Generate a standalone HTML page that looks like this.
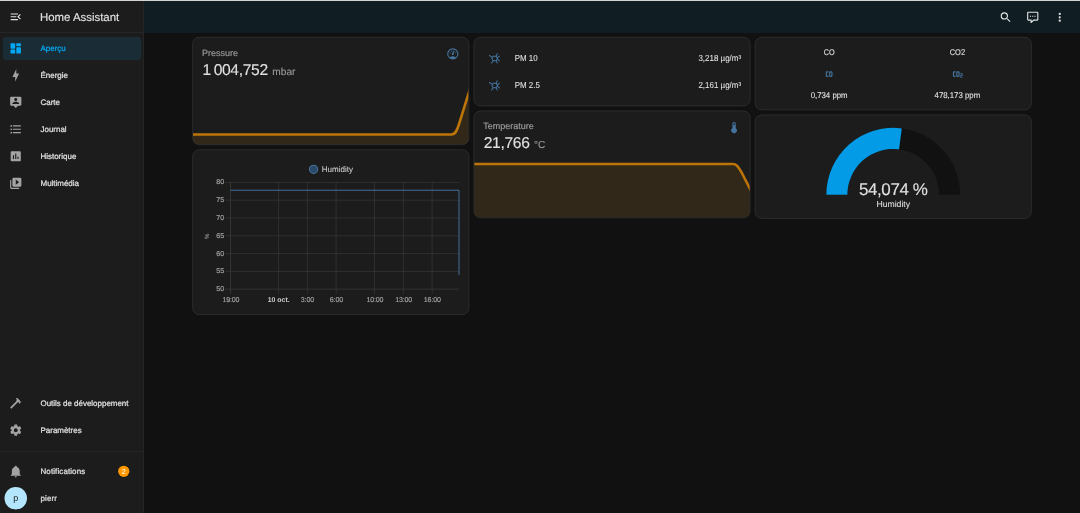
<!DOCTYPE html>
<html lang="fr">
<head>
<meta charset="utf-8">
<title>Home Assistant</title>
<style>
*{box-sizing:border-box;margin:0;padding:0}
html,body{width:1080px;height:513px;overflow:hidden;background:#111111}
body{font-family:"Liberation Sans",Arial,sans-serif;color:#e1e1e1;position:relative;text-rendering:geometricPrecision}
#topline{position:absolute;left:0;top:0;width:1080px;height:1px;background:#d4d5d3;z-index:10}
#app{position:absolute;left:0;top:1px;width:1940px;height:930px;transform:scale(.5625);transform-origin:0 0;background:#111111;overflow:hidden;filter:blur(.35px)}
svg{display:block}
/* sidebar */
#sidebar{position:absolute;left:0;top:0;width:256px;height:930px;background:#1c1c1c;border-right:1px solid #2e2e2e}
#sidebar .title{position:absolute;left:0;top:0;width:255px;height:56px;border-bottom:1px solid #2e2e2e}
#sidebar .title svg{position:absolute;left:16px;top:16px;width:24px;height:24px;fill:#e1e1e1}
#sidebar .title span{position:absolute;left:71px;top:0;line-height:58px;font-size:20.3px;color:#e1e1e1;white-space:nowrap;-webkit-text-stroke:.25px #e1e1e1}
.item{position:absolute;left:5px;width:246px;height:41px;border-radius:6px}
.item svg{position:absolute;left:11px;top:8.200px;width:24px;height:24px;fill:#a3a3a3}
.item span{position:absolute;left:67px;top:0;line-height:41px;font-size:14.15px;font-weight:400;color:#e1e1e1;white-space:nowrap;-webkit-text-stroke:.4px #e1e1e1}
.item.sel{background:#1a2c36}
.item.sel svg{fill:#03a9f4}
.item.sel span{color:#03a9f4;-webkit-text-stroke-color:#03a9f4}
#sidebar .divider{position:absolute;left:0;top:801px;width:255px;height:1px;background:#2e2e2e}
.badge{position:absolute;left:205px;top:10px;width:20px;height:20px;border-radius:50%;background:#ff9800;color:#fff;font-size:13px;line-height:20px;text-align:center}
.avatar{position:absolute;left:3px;top:0;width:40px;height:40px;border-radius:50%;background:#b3e5fc;color:#212121;font-size:16px;line-height:40px;text-align:center}
/* header */
#header{position:absolute;left:256px;top:0;width:1684px;height:57px;background:#101e24}
#header svg{position:absolute;top:16.500px;width:24px;height:24px;fill:#e1e1e1}
/* cards */
.card{position:absolute;background:#1c1c1c;border:1px solid #3c3c3c;border-radius:12px;overflow:hidden}
.sname{position:absolute;left:16px;top:16px;font-size:16px;-webkit-text-stroke:.3px #9b9b9b;line-height:24px;color:#9b9b9b;white-space:nowrap}
.sval{position:absolute;left:17px;top:38px;font-size:27.8px;line-height:40px;color:#e1e1e1;white-space:nowrap;letter-spacing:-.6px;-webkit-text-stroke:.2px #e1e1e1}
.sval small{font-size:18px;color:#9b9b9b;margin-left:8px;letter-spacing:0;-webkit-text-stroke:.2px #9b9b9b}
.sicon{position:absolute;right:16px;top:17px;width:24px;height:24px;fill:#44739e}
.row{position:absolute;left:16px;right:16px;height:40px}
.row svg{position:absolute;left:8px;top:8px;width:24px;height:24px}
.row .n{position:absolute;left:56px;top:1px;line-height:40px;font-size:15.4px;color:#e1e1e1;white-space:nowrap;-webkit-text-stroke:.12px #e1e1e1;transform:scaleX(.92);transform-origin:0 50%}
.row .v{position:absolute;right:0;top:1px;line-height:40px;font-size:15.4px;color:#e1e1e1;white-space:nowrap;-webkit-text-stroke:.12px #e1e1e1;transform:scaleX(.92);transform-origin:100% 50%}
.gl{position:absolute;width:246px;text-align:center;font-size:14.8px;line-height:20px;color:#e1e1e1;white-space:nowrap;-webkit-text-stroke:.2px #e1e1e1;transform:scaleX(.94)}
</style>
</head>
<body>
<div id="topline"></div>
<div id="app">

<div id="header">
  <svg style="left:1520px" viewBox="0 0 24 24"><path d="M9.5,3A6.5,6.5 0 0,1 16,9.5C16,11.11 15.41,12.59 14.44,13.73L14.71,14H15.5L20.5,19L19,20.5L14,15.5V14.71L13.73,14.44C12.59,15.41 11.11,16 9.5,16A6.5,6.5 0 0,1 3,9.5A6.5,6.5 0 0,1 9.5,3M9.5,5C7,5 5,7 5,9.5C5,12 7,14 9.5,14C12,14 14,12 14,9.5C14,7 12,5 9.5,5Z"/></svg>
  <svg style="left:1568px" viewBox="0 0 24 24"><path d="M9,22A1,1 0 0,1 8,21V18H4A2,2 0 0,1 2,16V4C2,2.89 2.9,2 4,2H20A2,2 0 0,1 22,4V16A2,2 0 0,1 20,18H13.9L10.2,21.71C10,21.9 9.75,22 9.5,22V22H9M10,16V19.08L13.08,16H20V4H4V16H10M17,11H15V9H17V11M13,11H11V9H13V11M9,11H7V9H9V11Z"/></svg>
  <svg style="left:1616px" viewBox="0 0 24 24"><path d="M12,16A2,2 0 0,1 14,18A2,2 0 0,1 12,20A2,2 0 0,1 10,18A2,2 0 0,1 12,16M12,10A2,2 0 0,1 14,12A2,2 0 0,1 12,14A2,2 0 0,1 10,12A2,2 0 0,1 12,10M12,4A2,2 0 0,1 14,6A2,2 0 0,1 12,8A2,2 0 0,1 10,6A2,2 0 0,1 12,4Z"/></svg>
</div>

<div id="sidebar">
  <div class="title">
    <svg viewBox="0 0 24 24"><path d="M21,15.61L19.59,17L14.58,12L19.59,7L21,8.39L17.44,12L21,15.61M3,6H16V8H3V6M3,13V11H13V13H3M3,18V16H16V18H3Z"/></svg>
    <span>Home Assistant</span>
  </div>
  <div class="item sel" style="top:64px"><svg viewBox="0 0 24 24"><rect x="2.700" y="3" width="8.300" height="9.800" rx="1.200"/><rect x="2.700" y="14.300" width="8.300" height="7.200" rx="1.200"/><rect x="13" y="3" width="8.200" height="5.600" rx="1.200"/><rect x="13" y="10.200" width="8.200" height="11.300" rx="1.200"/></svg><span>Aperçu</span></div>
  <div class="item" style="top:112px"><svg viewBox="0 0 24 24"><path d="M11,15H6L13,1V9H18L11,23V15Z"/></svg><span>Énergie</span></div>
  <div class="item" style="top:160px"><svg viewBox="0 0 24 24"><path d="M20,2H4A2,2 0 0,0 2,4V16A2,2 0 0,0 4,18H8L12,22L16,18H20A2,2 0 0,0 22,16V4A2,2 0 0,0 20,2M12,4.3C13.5,4.3 14.7,5.5 14.7,7C14.7,8.5 13.5,9.7 12,9.7C10.5,9.7 9.3,8.5 9.3,7C9.3,5.5 10.5,4.3 12,4.3M18,15H6V14.1C6,12.1 10,11 12,11C14,11 18,12.1 18,14.1V15Z"/></svg><span>Carte</span></div>
  <div class="item" style="top:208px"><svg viewBox="0 0 24 24"><path d="M7,5H21V7H7V5M7,13V11H21V13H7M4,4.5A1.5,1.5 0 0,1 5.5,6A1.5,1.5 0 0,1 4,7.5A1.5,1.5 0 0,1 2.5,6A1.5,1.5 0 0,1 4,4.5M4,10.5A1.5,1.5 0 0,1 5.5,12A1.5,1.5 0 0,1 4,13.5A1.5,1.5 0 0,1 2.5,12A1.5,1.5 0 0,1 4,10.5M7,19V17H21V19H7M4,16.5A1.5,1.5 0 0,1 5.5,18A1.5,1.5 0 0,1 4,19.5A1.5,1.5 0 0,1 2.5,18A1.5,1.5 0 0,1 4,16.5Z"/></svg><span>Journal</span></div>
  <div class="item" style="top:256px"><svg viewBox="0 0 24 24"><path d="M19,3H5C3.9,3 3,3.9 3,5V19C3,20.1 3.9,21 5,21H19C20.1,21 21,20.1 21,19V5C21,3.9 20.1,3 19,3M9,17H7V10H9V17M13,17H11V7H13V17M17,17H15V13H17V17Z"/></svg><span>Historique</span></div>
  <div class="item" style="top:304px"><svg viewBox="0 0 24 24"><path d="M4,6H2V20A2,2 0 0,0 4,22H18V20H4V6M20,2H8A2,2 0 0,0 6,4V16A2,2 0 0,0 8,18H20A2,2 0 0,0 22,16V4A2,2 0 0,0 20,2M12,14.5V5.5L18,10L12,14.5Z"/></svg><span>Multimédia</span></div>

  <div class="item" style="top:695px"><svg viewBox="0 0 24 24"><path d="M2,19.63L13.43,8.2L12.72,7.5L14.14,6.07L12,3.89C13.2,2.7 15.09,2.7 16.27,3.89L19.87,7.5L18.45,8.91H21.29L22,9.62L18.45,13.21L17.74,12.5V9.62L16.27,11.04L15.56,10.33L4.13,21.76L2,19.63Z"/></svg><span style="top:0.3px">Outils de développement</span></div>
  <div class="item" style="top:743px"><svg viewBox="0 0 24 24"><path d="M12,15.5A3.5,3.5 0 0,1 8.5,12A3.5,3.5 0 0,1 12,8.5A3.5,3.5 0 0,1 15.5,12A3.5,3.5 0 0,1 12,15.5M19.43,12.97C19.47,12.65 19.5,12.33 19.5,12C19.5,11.67 19.47,11.34 19.43,11L21.54,9.37C21.73,9.22 21.78,8.95 21.66,8.73L19.66,5.27C19.54,5.05 19.27,4.96 19.05,5.05L16.56,6.05C16.04,5.66 15.5,5.32 14.87,5.07L14.5,2.42C14.46,2.18 14.25,2 14,2H10C9.75,2 9.54,2.18 9.5,2.42L9.13,5.07C8.5,5.32 7.96,5.66 7.44,6.05L4.95,5.05C4.73,4.96 4.46,5.05 4.34,5.27L2.34,8.73C2.21,8.95 2.27,9.22 2.46,9.37L4.57,11C4.53,11.34 4.5,11.67 4.5,12C4.5,12.33 4.53,12.65 4.57,12.97L2.46,14.63C2.27,14.78 2.21,15.05 2.34,15.27L4.34,18.73C4.46,18.95 4.73,19.03 4.95,18.95L7.44,17.94C7.96,18.34 8.5,18.68 9.13,18.93L9.5,21.58C9.54,21.82 9.75,22 10,22H14C14.25,22 14.46,21.82 14.5,21.58L14.87,18.93C15.5,18.67 16.04,18.34 16.56,17.94L19.05,18.95C19.27,19.03 19.54,18.95 19.66,18.73L21.66,15.27C21.78,15.05 21.73,14.78 21.54,14.63L19.43,12.97Z"/></svg><span style="top:0.3px">Paramètres</span></div>
  <div class="divider"></div>
  <div class="item" style="top:816px"><svg viewBox="0 0 24 24"><path d="M21,19V20H3V19L5,17V11C5,7.9 7.03,5.17 10,4.29C10,4.19 10,4.1 10,4A2,2 0 0,1 12,2A2,2 0 0,1 14,4C14,4.1 14,4.19 14,4.29C16.97,5.17 19,7.9 19,11V17L21,19M14,21A2,2 0 0,1 12,23A2,2 0 0,1 10,21"/></svg><span style="letter-spacing:.2px">Notifications</span><div class="badge">2</div></div>
  <div class="item" style="top:864px"><div class="avatar">p</div><span style="letter-spacing:.25px">pierr</span></div>
</div>

<!-- column 1 -->
<div class="card" id="c-pressure" style="left:342px;top:64px;width:492px;height:192px">
  <div class="sname">Pressure</div>
  <svg class="sicon" viewBox="0 0 24 24"><path d="M12,2A10,10 0 0,0 2,12A10,10 0 0,0 12,22A10,10 0 0,0 22,12A10,10 0 0,0 12,2M12,4A8,8 0 0,1 20,12C20,14.4 19,16.5 17.3,18C15.9,16.7 14,16 12,16C10,16 8.2,16.7 6.7,18C5,16.5 4,14.4 4,12A8,8 0 0,1 12,4M14,5.89C13.62,5.9 13.26,6.15 13.1,6.54L11.81,9.77L11.71,10C11,10.13 10.41,10.6 10.14,11.26C9.73,12.29 10.23,13.45 11.26,13.86C12.29,14.27 13.45,13.77 13.86,12.74C14.12,12.08 14,11.32 13.57,10.76L13.67,10.5L14.96,7.29L14.97,7.26C15.17,6.75 14.92,6.17 14.41,5.96C14.28,5.91 14.15,5.89 14,5.89M10,6A1,1 0 0,0 9,7A1,1 0 0,0 10,8A1,1 0 0,0 11,7A1,1 0 0,0 10,6M7,9A1,1 0 0,0 6,10A1,1 0 0,0 7,11A1,1 0 0,0 8,10A1,1 0 0,0 7,9M17,9A1,1 0 0,0 16,10A1,1 0 0,0 17,11A1,1 0 0,0 18,10A1,1 0 0,0 17,9Z"/></svg>
  <div class="sval">1&#8239;004,752<small>mbar</small></div>
  <svg style="position:absolute;left:0;top:0;width:490px;height:190px" viewBox="0 0 490 190" preserveAspectRatio="none">
    <path d="M-5,172.300 L459.500,172.300 C466.500,172.300 469.500,165.500 473,154 L493,89.800 L492,195 L-5,195Z" fill="#ff9800" fill-opacity=".098"/>
    <path d="M-5,172.300 L459.500,172.300 C466.500,172.300 469.500,165.500 473,154 L493,89.800" fill="none" stroke="#bd750a" stroke-width="4.600" stroke-linecap="round" stroke-linejoin="round"/>
  </svg>
</div>

<div class="card" id="c-chart" style="left:342px;top:264px;width:492px;height:294px">
  <svg style="position:absolute;left:-1px;top:-1px;width:492px;height:294px" viewBox="0 0 492 294" font-family="Liberation Sans, Arial, sans-serif" font-size="12.600" fill="#a6a6a6" stroke="#a6a6a6" stroke-width=".25">
    <g stroke="#3f3f3f" stroke-width="1" fill="none">
      <path d="M58,58.500H474.500 M58,90.100H474.500 M58,121.700H474.500 M58,153.400H474.500 M58,185H474.500 M58,216.600H474.500"/>
      <path d="M153.100,58V257 M204.300,58V257 M255.500,58V257 M323.800,58V257 M375,58V257 M426.200,58V257"/>
      <path d="M58,248.200H474.500 M67.800,58V257" stroke="#4a4541"/>
    </g>
    <path d="M67.800,72.400H474V223" fill="none" stroke="#44739e" stroke-width="1.700"/>
    <circle cx="215.500" cy="35.200" r="7.400" fill="#2c4a68" stroke="#44739e" stroke-width="1.800"/>
    <text x="230" y="40" fill="#cdcdcd" stroke="#cdcdcd" stroke-width=".15" font-size="14.600" textLength="55.500" lengthAdjust="spacingAndGlyphs">Humidity</text>
    <g text-anchor="end">
      <text x="56.500" y="62">80</text><text x="56.500" y="93.600">75</text><text x="56.500" y="125.200">70</text><text x="56.500" y="156.900">65</text><text x="56.500" y="188.500">60</text><text x="56.500" y="220.100">55</text><text x="56.500" y="251.700">50</text>
    </g>
    <g text-anchor="middle" letter-spacing="-.3">
      <text x="68.500" y="271">19:00</text><text x="153.500" y="271" font-weight="bold" font-size="12.300" stroke-width="0" fill="#cfcfcf" letter-spacing="0">10 oct.</text><text x="204.500" y="271">3:00</text><text x="256" y="271">6:00</text><text x="324.500" y="271">10:00</text><text x="375.500" y="271">13:00</text><text x="426.500" y="271">16:00</text>
    </g>
    <text x="0" y="0" transform="translate(30,154) rotate(-90)" text-anchor="middle" font-size="11" stroke-width="0">%</text>
  </svg>
</div>

<!-- column 2 -->
<div class="card" id="c-pm" style="left:842px;top:64px;width:492px;height:123px">
  <div class="row" style="top:16px"><svg viewBox="0 0 24 24" fill="none" stroke="#44739e" stroke-width="1.800" stroke-linecap="round" stroke-linejoin="round"><path d="M7.400,13.200L9.800,9.100H15L17.400,13.200L15,17.300H9.800Z"/><path d="M3.200,7.900L8.300,11.300M15,9.100L17,4.700M17.400,12.300L20.800,8.900M17.400,14.300L20.800,17.400M9.800,17.300L7,21.200M15,17.300L17,21.200" stroke-width="1.900"/></svg><span class="n">PM 10</span><span class="v">3,218 µg/m³</span></div>
  <div class="row" style="top:64px"><svg viewBox="0 0 24 24" fill="none" stroke="#44739e" stroke-width="1.800" stroke-linecap="round" stroke-linejoin="round"><path d="M7.400,13.200L9.800,9.100H15L17.400,13.200L15,17.300H9.800Z"/><path d="M3.200,7.900L8.300,11.300M15,9.100L17,4.700M17.400,12.300L20.800,8.900M17.400,14.300L20.800,17.400M9.800,17.300L7,21.200M15,17.300L17,21.200" stroke-width="1.900"/></svg><span class="n">PM 2.5</span><span class="v">2,161 µg/m³</span></div>
</div>

<div class="card" id="c-temp" style="left:842px;top:195px;width:492px;height:191px">
  <div class="sname">Temperature</div>
  <svg class="sicon" viewBox="0 0 24 24"><path d="M15,13V5A3,3 0 0,0 9,5V13A5,5 0 1,0 15,13M12,4A1,1 0 0,1 13,5V8H11V5A1,1 0 0,1 12,4Z"/></svg>
  <div class="sval" style="top:37px">21,766<small>°C</small></div>
  <svg style="position:absolute;left:0;top:-1px;width:490px;height:190px" viewBox="0 0 490 190" preserveAspectRatio="none">
    <path d="M-5,94.800 L460,94.800 C466,94.800 469,99 475,109 L492,142 L492,195 L-5,195Z" fill="#ff9800" fill-opacity=".098"/>
    <path d="M-5,94.800 L460,94.800 C466,94.800 469,99 475,109 L492,142" fill="none" stroke="#bd750a" stroke-width="4.600" stroke-linecap="round" stroke-linejoin="round"/>
  </svg>
</div>

<!-- column 3 -->
<div class="card" id="c-co" style="left:1342px;top:64px;width:492px;height:130px">
  <div class="gl" style="left:8px;top:16.800px;transform:scaleX(.88)">CO</div>
  <div class="gl" style="left:236px;top:16.800px;transform:scaleX(.9)">CO2</div>
  <svg style="position:absolute;left:120px;top:53px;width:24px;height:24px;fill:#44739e" viewBox="0 0 24 24"><path d="M7,7A2,2 0 0,0 5,9V15A2,2 0 0,0 7,17H10V15H7V9H10V7H7M13,7A2,2 0 0,0 11,9V15A2,2 0 0,0 13,17H15A2,2 0 0,0 17,15V9A2,2 0 0,0 15,7H13M13,9H15V15H13V9Z"/></svg>
  <svg style="position:absolute;left:348px;top:53px;width:24px;height:24px;fill:#44739e" viewBox="0 0 24 24"><path d="M5,7A2,2 0 0,0 3,9V15A2,2 0 0,0 5,17H8V15H5V9H8V7H5M11,7A2,2 0 0,0 9,9V15A2,2 0 0,0 11,17H13A2,2 0 0,0 15,15V9A2,2 0 0,0 13,7H11M11,9H13V15H11V9M16,10.5V12H19V13.5H17.5A1.5,1.5 0 0,0 16,15V18H20.5V16.5H17.5V15H19A1.5,1.5 0 0,0 20.5,13.5V12A1.5,1.5 0 0,0 19,10.5H16Z"/></svg>
  <div class="gl" style="left:8px;top:93px">0,734 ppm</div>
  <div class="gl" style="left:236px;top:93px">478,173 ppm</div>
</div>

<div class="card" id="c-gauge" style="left:1342px;top:202px;width:492px;height:185px">
  <svg style="position:absolute;left:0;top:0;width:490px;height:182px" viewBox="0 0 490 182">
    <path d="M126,141.500 A119,119 0 0,1 364,141.500 L326.500,141.500 A81.500,81.500 0 0,0 163.500,141.500Z" fill="#111111"/>
    <path d="M126,141.500 A119,119 0 0,1 260.19,23.47 L255.40,60.67 A81.500,81.500 0 0,0 163.500,141.500Z" fill="#039be5"/>
  </svg>
  <div style="position:absolute;left:0;width:490px;top:114.500px;text-align:center;font-size:30.200px;line-height:36px;color:#e1e1e1;letter-spacing:-.7px;-webkit-text-stroke:.2px #e1e1e1">54,074 %</div>
  <div style="position:absolute;left:0;width:490px;top:149px;text-align:center;font-size:15.400px;line-height:20px;color:#e1e1e1;-webkit-text-stroke:.1px #e1e1e1">Humidity</div>
</div>

</div>
</body>
</html>
